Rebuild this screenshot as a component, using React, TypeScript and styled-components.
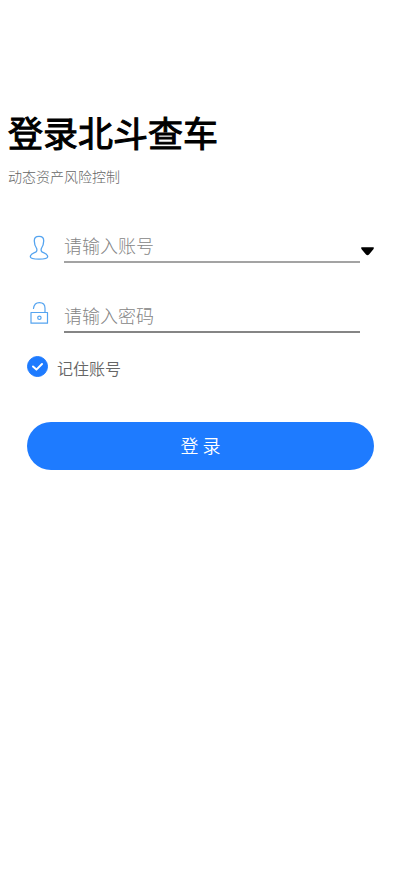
import React, { useState } from "react";
import styled, { createGlobalStyle } from "styled-components";

const GlobalStyle = createGlobalStyle`
  * { box-sizing: border-box; }
  body {
    margin: 0;
    background: #fff;
    font-family: "Noto Sans CJK SC", "Noto Sans", sans-serif;
  }
`;

const Page = styled.main`
  min-height: 100vh;
  padding-top: 106px;
`;

const Header = styled.header`
  padding: 0 8px;
`;

const Title = styled.h1`
  margin: 0;
  font-size: 35px;
  line-height: 52px;
  font-weight: 400;
  color: #000;
  -webkit-text-stroke: 1px #000;
`;

const Subtitle = styled.p`
  margin: 7px 0 0;
  font-size: 14px;
  line-height: 22px;
  font-weight: 300;
  color: #666;
`;

const Form = styled.form`
  display: flex;
  flex-direction: column;
  padding: 0 27px;
  margin-top: 32px;
`;

const Field = styled.div`
  display: grid;
  grid-template-columns: 24px 1fr 14px;
  align-items: center;
  height: 44px;

  & + & {
    margin-top: 26px;
  }
`;

const FieldIcon = styled.label`
  display: flex;
  height: 30px;
  margin-top: 14px;
`;

const TextInput = styled.input<{ $line: string }>`
  min-width: 0;
  height: 44px;
  margin-left: 13px;
  padding: 10px 0 0;
  border: 0;
  border-bottom: 2px solid ${(p) => p.$line};
  border-radius: 0;
  outline: none;
  background: transparent;
  font-family: inherit;
  font-size: 18px;
  font-weight: 300;
  color: #333;

  &::placeholder {
    color: #858585;
    opacity: 1;
  }
`;

const HistoryButton = styled.button`
  display: flex;
  justify-content: flex-end;
  align-items: center;
  height: 24px;
  margin-top: 20px;
  padding: 0;
  border: 0;
  background: none;
  cursor: pointer;
`;

const Remember = styled.label`
  display: flex;
  align-items: center;
  gap: 9px;
  align-self: flex-start;
  height: 24px;
  margin-top: 23px;
  font-size: 16px;
  line-height: 24px;
  font-weight: 350;
  color: #666;
  cursor: pointer;
`;

const CheckWrap = styled.span`
  display: grid;
  margin-bottom: 3px;

  & > * {
    grid-area: 1 / 1;
  }

  svg {
    pointer-events: none;
  }
`;

const Checkbox = styled.input`
  appearance: none;
  width: 21px;
  height: 21px;
  margin: 0;
  border: 1px solid #1e7bff;
  border-radius: 50%;

  &:checked {
    background: #1e7bff;
  }
`;

const SubmitButton = styled.button`
  height: 48px;
  margin-top: 42px;
  padding: 0 0 2px;
  border: 0;
  border-radius: 24px;
  background: #1e7bff;
  color: #fff;
  font-family: inherit;
  font-size: 18px;
  line-height: 46px;
  font-weight: 350;
  cursor: pointer;
`;

const UserIcon = () => (
  <svg width="24" height="30" viewBox="0 0 24 30" fill="none" stroke="#55a4f0" strokeWidth="1.3" strokeLinejoin="round" aria-hidden="true">
    <path d="M12 3.3C8.6 3.3 7.2 4.8 7.3 8C7.4 11.4 8 13 9.4 15C10.2 16.4 10.1 18.4 8.6 19.2C6.4 20.2 3.4 20.8 3.3 23.8C3.3 25.4 6 26.2 12 26.2C18 26.2 20.7 25.4 20.7 23.8C20.6 20.8 17.6 20.2 15.4 19.2C13.9 18.4 13.8 16.4 14.6 15C16 13 16.6 11.4 16.7 8C16.8 4.8 15.4 3.3 12 3.3Z" />
  </svg>
);

const LockIcon = () => (
  <svg width="24" height="30" viewBox="0 0 24 30" fill="none" stroke="#55a4f0" strokeWidth="1.2" strokeLinejoin="round" overflow="visible" aria-hidden="true">
    <path d="M4 9.5H20.5V20.2H4Z" />
    <path d="M6.5 5.5C7 1.8 9.2 -0.4 12.4 -0.4C15.8 -0.4 18 1.9 18 5.2V9.5" strokeLinecap="round" />
    <circle cx="12.4" cy="14.8" r="1.7" />
  </svg>
);

export default function App() {
  const [account, setAccount] = useState("");
  const [password, setPassword] = useState("");
  const [remember, setRemember] = useState(true);

  return (
    <>
      <GlobalStyle />
      <Page>
        <Header>
          <Title>登录北斗查车</Title>
          <Subtitle>动态资产风险控制</Subtitle>
        </Header>
        <Form onSubmit={(e) => e.preventDefault()}>
          <Field>
            <FieldIcon htmlFor="account" aria-label="账号">
              <UserIcon />
            </FieldIcon>
            <TextInput
              id="account"
              $line="#a3a3a3"
              placeholder="请输入账号"
              value={account}
              onChange={(e) => setAccount(e.target.value)}
            />
            <HistoryButton type="button" aria-label="选择账号">
              <svg width="13" height="9" viewBox="0 0 13 9" aria-hidden="true">
                <path d="M0.4 0.3H12.6Q13.2 1.4 12.2 2.4L8 7.5Q6.5 9 5 7.5L0.8 2.4Q-0.2 1.4 0.4 0.3Z" />
              </svg>
            </HistoryButton>
          </Field>
          <Field>
            <FieldIcon htmlFor="password" aria-label="密码">
              <LockIcon />
            </FieldIcon>
            <TextInput
              id="password"
              type="password"
              $line="#858585"
              placeholder="请输入密码"
              value={password}
              onChange={(e) => setPassword(e.target.value)}
            />
          </Field>
          <Remember>
            <CheckWrap>
              <Checkbox
                type="checkbox"
                checked={remember}
                onChange={(e) => setRemember(e.target.checked)}
              />
              <svg width="21" height="21" viewBox="0 0 21 21" fill="none" stroke="#fff" strokeWidth="2" strokeLinecap="round" strokeLinejoin="round" aria-hidden="true">
                <path d="M6 10.5L9.4 13.6L15 8" />
              </svg>
            </CheckWrap>
            记住账号
          </Remember>
          <SubmitButton type="submit">登 录</SubmitButton>
        </Form>
      </Page>
    </>
  );
}
